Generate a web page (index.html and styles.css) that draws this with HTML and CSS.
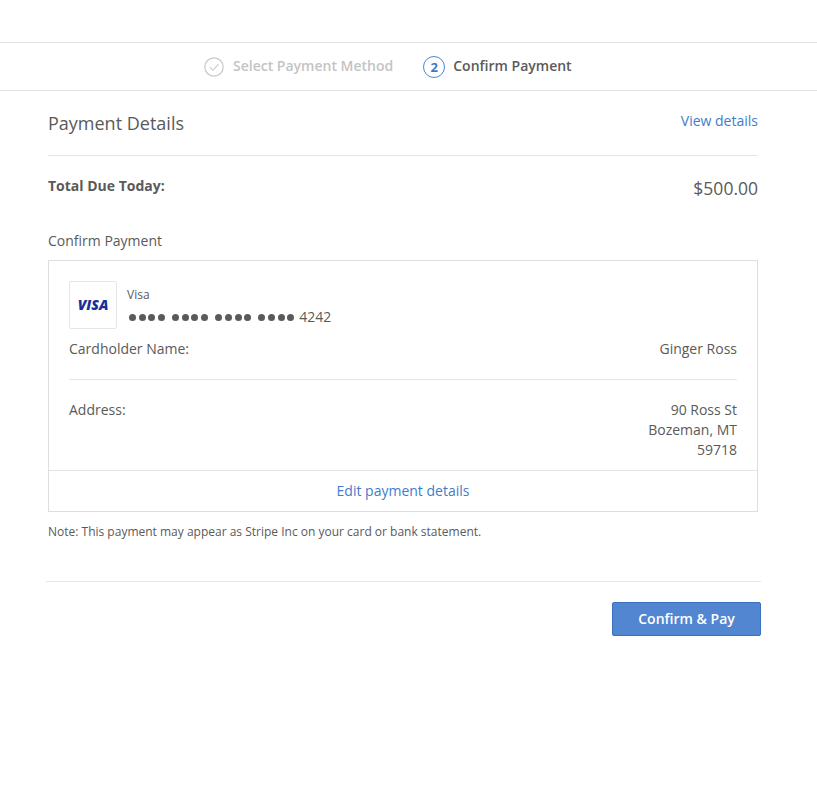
FILE: index.html
```html
<!DOCTYPE html>
<html lang="en">
  <head>
    <meta charset="UTF-8" />
    <meta name="viewport" content="width=device-width, initial-scale=1.0" />
    <title>Confirm Payment</title>
    <link rel="stylesheet" href="styles.css">
  </head>
  <body>
    <div class="steps">
      <div class="step done">
        <svg class="step-icon" width="20" height="20" viewBox="0 0 20 20">
          <circle cx="10" cy="10" r="9.2" fill="none" stroke="#c8c8c8" stroke-width="1.2" />
          <path d="M5.8 10.2 L8.9 13.3 L14.4 7.2" fill="none" stroke="#c8c8c8" stroke-width="1.1" />
        </svg>
        <span class="step-label">Select Payment Method</span>
      </div>
      <div class="step current">
        <span class="step-num">2</span>
        <span class="step-label">Confirm Payment</span>
      </div>
    </div>

    <div class="content">
      <div class="details-head">
        <h2>Payment Details</h2>
        <a href="#" class="link">View details</a>
      </div>

      <div class="total">
        <strong>Total Due Today:</strong>
        <span class="amount">$500.00</span>
      </div>

      <h3>Confirm Payment</h3>

      <div class="card-box">
        <div class="card-body">
          <div class="card-info">
            <div class="card-logo">VISA</div>
            <div class="card-text">
              <div class="card-brand">Visa</div>
              <div class="card-number">
                <span class="dots"><i></i><i></i><i></i><i></i></span>
                <span class="dots"><i></i><i></i><i></i><i></i></span>
                <span class="dots"><i></i><i></i><i></i><i></i></span>
                <span class="dots"><i></i><i></i><i></i><i></i></span>
                <span class="last-four">4242</span>
              </div>
            </div>
          </div>
          <div class="row name-row">
            <span>Cardholder Name:</span>
            <span>Ginger Ross</span>
          </div>
          <div class="row">
            <span>Address:</span>
            <span class="address">90 Ross St<br />Bozeman, MT<br />59718</span>
          </div>
        </div>
        <div class="card-foot"><a href="#" class="link">Edit payment details</a></div>
      </div>

      <p class="note">Note: This payment may appear as Stripe Inc on your card or bank statement.</p>
    </div>

    <div class="actions">
      <button class="pay-btn">Confirm &amp; Pay</button>
    </div>
  </body>
</html>
```

FILE: styles.css
```css
body {
  margin: 0;
  padding-top: 42px;
  font-family: "Open Sans", sans-serif;
  font-size: 14px;
  color: #5a5a5a;
  background: #fff;
}
.steps {
  display: flex;
  height: 47px;
  padding-left: 204px;
  gap: 30px;
  align-items: center;
  border-top: 1px solid #e3e3e3;
  border-bottom: 1px solid #e3e3e3;
  font-weight: 600;
}
.step {
  display: flex;
  align-items: center;
  gap: 9px;
}
.step.current {
  gap: 8px;
}
.step.done {
  color: #c4c4c4;
}
.step-label {
  padding-bottom: 2px;
}
.step-num {
  width: 20px;
  height: 20px;
  border: 1px solid #4a86d8;
  border-radius: 50%;
  color: #3f78c4;
  font-size: 13px;
  font-weight: 700;
  line-height: 20px;
  text-align: center;
}
.content {
  margin: 0 59px 0 48px;
}
.details-head {
  display: flex;
  justify-content: space-between;
  height: 64px;
  border-bottom: 1px solid #e6e6e6;
}
h2 {
  margin: 20px 0 0;
  font-size: 18px;
  font-weight: 400;
  line-height: 24px;
}
.details-head .link {
  margin-top: 20px;
}
.link {
  color: #3f7ccb;
  text-decoration: none;
  line-height: 20px;
}
.total {
  display: flex;
  justify-content: space-between;
  margin-top: 20px;
}
.total strong {
  line-height: 20px;
}
.amount {
  font-size: 17.5px;
  line-height: 24px;
}
h3 {
  margin: 31px 0 9px;
  font-size: 14px;
  font-weight: 400;
  line-height: 20px;
}
.card-box {
  border: 1px solid #dedede;
}
.card-body {
  padding: 20px 20px 0;
}
.card-info {
  display: flex;
  gap: 10px;
}
.card-logo {
  width: 46px;
  height: 46px;
  border: 1px solid #e6e6e6;
  border-radius: 2px;
  color: #1a2f96;
  font-size: 14px;
  font-style: italic;
  font-weight: 800;
  line-height: 46px;
  text-align: center;
}
.card-brand {
  margin-top: 6px;
  font-size: 12px;
  line-height: 16px;
}
.card-number {
  display: flex;
  align-items: center;
  gap: 7px;
  margin-top: 4px;
  margin-left: 2px;
  line-height: 20px;
}
.dots {
  display: flex;
  gap: 2.7px;
}
.dots i {
  width: 7px;
  height: 7px;
  border-radius: 50%;
  background: #5a5a5a;
}
.last-four {
  margin-left: -2px;
}
.row {
  display: flex;
  justify-content: space-between;
  line-height: 20px;
}
.name-row {
  margin-top: 10px;
  padding-bottom: 20px;
  border-bottom: 1px solid #e6e6e6;
  margin-bottom: 20px;
}
.address {
  text-align: right;
  margin-bottom: 10px;
}
.card-foot {
  height: 40px;
  border-top: 1px solid #e3e3e3;
  line-height: 40px;
  text-align: center;
}
.card-foot .link {
  line-height: inherit;
}
.note {
  margin: 11px 0 0;
  font-size: 12px;
  line-height: 18px;
}
.actions {
  display: flex;
  justify-content: flex-end;
  margin: 40px 56px 0 46px;
  padding-top: 20px;
  border-top: 1px solid #e6e6e6;
}
.pay-btn {
  width: 149px;
  height: 34px;
  padding: 0 0 2px;
  border: 1px solid #3a70bf;
  border-radius: 2px;
  background: #5286d0;
  color: #fff;
  font-family: inherit;
  font-size: 14px;
  font-weight: 600;
}
```
